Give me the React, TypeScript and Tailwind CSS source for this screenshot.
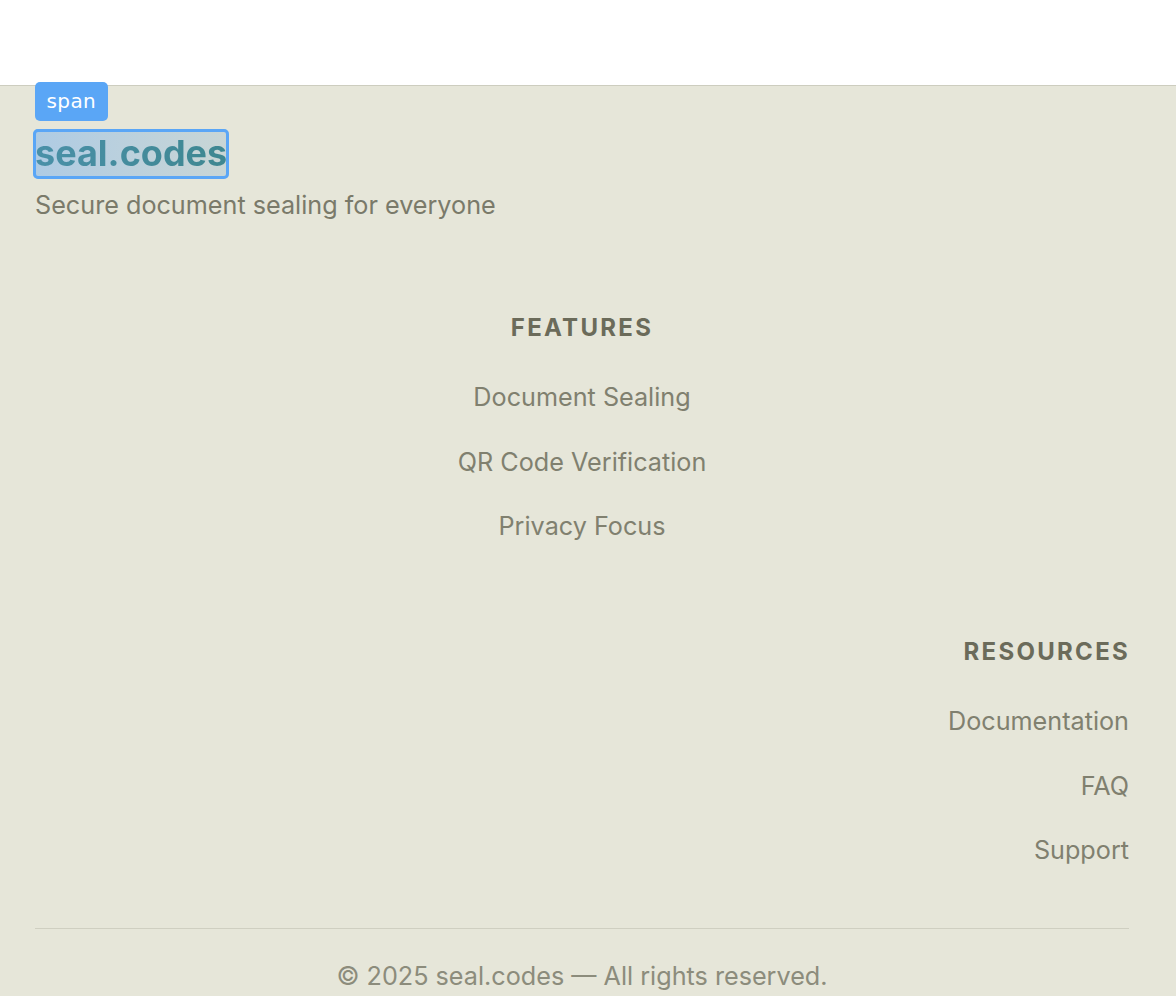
const features = ["Document Sealing", "QR Code Verification", "Privacy Focus"];
const resources = ["Documentation", "FAQ", "Support"];

const App = () => {
  return (
    <div className="min-h-screen bg-[#e6e6d9] font-['Inter',sans-serif]">
      {/* Top bar */}
      <div className="h-[86px] bg-white border-b border-[#cdcdbf]" />

      {/* Footer */}
      <footer className="pl-[35px] pr-[47px]">
        {/* Brand */}
        <div className="pt-[44px]">
          <div className="relative inline-block">
            {/* inspector highlight fill */}
            <div className="absolute -left-[2px] -right-[2px] -top-[1px] -bottom-[2px] rounded-[5px] bg-gradient-to-r from-[#aecbe4] to-[#c9d6d5]" />
            <span className="relative block text-[36px] leading-[47px] font-bold tracking-normal bg-gradient-to-r from-[#4a90a8] to-[#3e8791] bg-clip-text text-transparent">
              seal.codes
            </span>
            <div className="absolute -left-[2px] -right-[2px] -top-[1px] -bottom-[2px] rounded-[5px] border-[3px] border-[#5aa6f6] pointer-events-none" />
            <div className="absolute left-0 top-[-48px] h-[39px] px-[11.5px] rounded-[5px] bg-[#5aa6f6] text-white text-[20px] leading-[39px] font-['DejaVu_Sans',sans-serif] tracking-[0.02em]">
              span
            </div>
          </div>
          <p className="mt-[10px] text-[25.2px] leading-[36px] text-[#7a7a6a]">
            Secure document sealing for everyone
          </p>
        </div>

        {/* Features */}
        <div className="mt-[89px] flex flex-col items-center text-center">
          <h3 className="text-[24px] leading-[32px] font-bold tracking-[0.095em] uppercase text-[#6b6b5a]">
            Features
          </h3>
          <ul className="mt-[35px] flex flex-col gap-[28.5px]">
            {features.map((f) => (
              <li key={f} className="text-[25.2px] leading-[36px] text-[#80806f]">
                {f}
              </li>
            ))}
          </ul>
        </div>

        {/* Resources */}
        <div className="mt-[92px] flex flex-col items-end text-right">
          <h3 className="text-[24px] leading-[32px] font-bold tracking-[0.095em] uppercase text-[#6b6b5a] mr-[-1px]">
            Resources
          </h3>
          <ul className="mt-[35px] flex flex-col gap-[28.5px]">
            {resources.map((r) => (
              <li key={r} className="text-[25.2px] leading-[36px] text-[#80806f]">
                {r}
              </li>
            ))}
          </ul>
        </div>

        {/* Bottom */}
        <div className="mt-[60px] border-t border-[#cfcfc1] pt-[29px] pb-[20px] text-center">
          <p className="text-[25.2px] leading-[36px] text-[#8c8c7c]">
            © 2025 seal.codes — All rights reserved.
          </p>
        </div>
      </footer>
    </div>
  );
};

export default App;
